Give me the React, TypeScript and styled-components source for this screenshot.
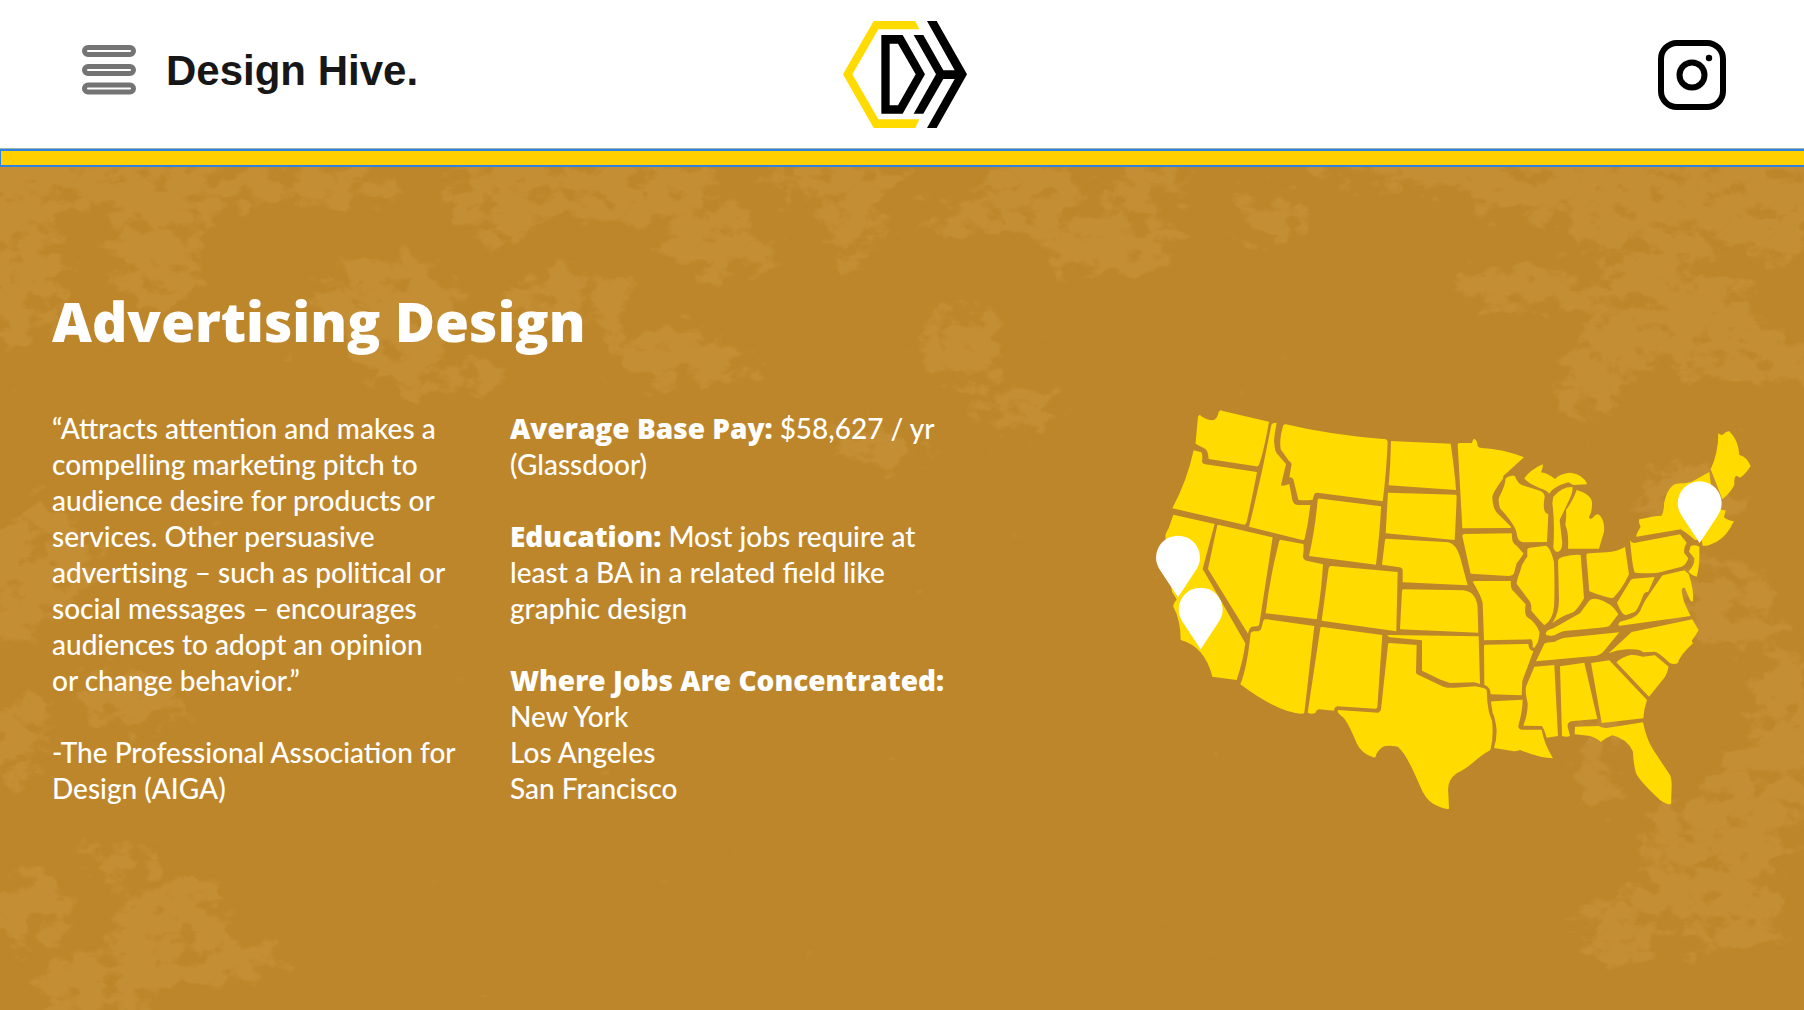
import React from "react";
import styled, { createGlobalStyle } from "styled-components";

const GlobalStyle = createGlobalStyle`
  *, *::before, *::after { box-sizing: border-box; }
  body { margin: 0; background: #bd862a; }
`;

const Page = styled.div`
  min-height: 100vh;
  display: flex;
  flex-direction: column;
`;

const Header = styled.header`
  display: grid;
  grid-template-columns: 1fr auto 1fr;
  align-items: center;
  min-height: 149px;
  padding: 1px 78px 0 82px;
  background: #fff;
  border-bottom: 1px solid #9ab6ae;
`;

const Brand = styled.div`
  display: flex;
  align-items: center;
  gap: 30px;
  padding-bottom: 9px;
`;

const IconButton = styled.button`
  display: flex;
  padding: 0;
  border: 0;
  background: none;
  cursor: pointer;
`;

const BrandName = styled.a`
  padding-top: 2px;
  color: #171717;
  font: 700 42px/48px "Liberation Sans", Arial, sans-serif;
  text-decoration: none;
`;

const IconLink = styled.a<{ $end?: boolean }>`
  display: flex;
  justify-self: ${(p) => (p.$end ? "end" : "center")};
`;

const Stripe = styled.div`
  height: 18px;
  background: #ffcf00;
  border: 2px solid #2f82e0;
  border-width: 2px 0 2px 1px;
`;

const Main = styled.main`
  position: relative;
  flex: 1;
  padding: 120px 52px 60px;
  overflow: hidden;
  background: #bd862a;
  color: #fff;
  font: 500 28px/36px Lato, "Open Sans", sans-serif;
`;

const Texture = styled.svg`
  position: absolute;
  inset: 0;
  width: 100%;
  height: 100%;
`;

const Content = styled.div`
  position: relative;
`;

const Title = styled.h1`
  margin: 0 0 55px;
  font-family: "Open Sans", Lato, sans-serif;
  font-size: 55px;
  font-weight: 800;
  line-height: 68px;
`;

const Columns = styled.div`
  display: grid;
  grid-template-columns: 410px 460px minmax(0, 1fr);
  column-gap: 48px;
  align-items: start;
`;

const Copy = styled.div`
  display: flex;
  flex-direction: column;
  gap: 36px;
`;

const Paragraph = styled.p`
  margin: 0;
`;

const Strong = styled.strong`
  font-family: "Open Sans", Lato, sans-serif;
  font-weight: 800;
  line-height: 1;
`;

const Cities = styled.ul`
  margin: 0;
  padding: 0;
  list-style: none;
`;

const MapSvg = styled.svg`
  justify-self: end;
  width: 100%;
  max-width: 595px;
  height: auto;
`;

const MenuIcon = () => (
  <svg width="54" height="50" viewBox="0 0 54 50" fill="#fff" stroke="#747474" strokeWidth="5">
    <rect x="2.5" y="2.5" width="49" height="7" rx="3.5" />
    <rect x="2.5" y="21.5" width="49" height="7" rx="3.5" />
    <rect x="2.5" y="40" width="49" height="7" rx="3.5" />
  </svg>
);

const Logo = () => (
  <svg width="124" height="107" viewBox="127 63 372 321" overflow="visible">
    <path fill="#ffdb00" d="M222 63H347L359 88H236L158 223L236 358H359L347 384H222L130 223Z" />
    <path fillRule="evenodd" d="M245 105H309L376 223L309 341H245ZM270 131V316H295L348 223L295 131Z" />
    <path d="M342 105H371L431 211H465L382 63H411L502 223L411 384H382L465 237H431L371 341H342L409 223Z" />
  </svg>
);

const InstagramIcon = () => (
  <svg width="68" height="70" viewBox="0 0 68 70" fill="none" stroke="#000" strokeWidth="6">
    <rect x="3" y="3" width="62" height="64" rx="16" />
    <circle cx="34" cy="35" r="12.5" />
    <circle cx="51" cy="18" r="3.2" fill="#000" stroke="none" />
  </svg>
);

// Soft patches [cx, cy, rx, ry]; the filter breaks them up into worn paint.
const patches = [
  [60, 10, 190, 34], [20, 60, 40, 55], [158, 78, 52, 68], [280, 20, 130, 26], [25, 120, 45, 60],
  [500, 25, 58, 58], [390, 140, 80, 55], [440, 210, 90, 20], [640, 25, 90, 40], [720, 80, 60, 40], [570, 130, 75, 30],
  [850, 50, 34, 55], [830, 8, 80, 24], [960, 50, 50, 22], [1030, 25, 55, 40], [1110, 75, 75, 40],
  [1150, 12, 50, 22], [1270, 50, 40, 32], [1450, 4, 150, 24], [1640, 14, 200, 50], [1770, 35, 80, 60],
  [1660, 62, 100, 36], [1520, 122, 70, 30], [1660, 130, 100, 30], [1690, 175, 110, 34], [1770, 190, 90, 30],
  [1590, 215, 40, 45], [680, 190, 80, 35], [960, 180, 50, 42], [1010, 245, 50, 26], [880, 280, 55, 24],
  [40, 390, 65, 55], [130, 530, 60, 32], [20, 570, 35, 55], [20, 440, 35, 50],
  [170, 762, 62, 58], [100, 815, 80, 36], [220, 795, 70, 28], [30, 740, 45, 45], [120, 690, 40, 22],
  [1720, 440, 60, 50], [1785, 560, 40, 90], [1750, 640, 60, 60], [1700, 690, 60, 70],
  [1620, 760, 50, 40], [1730, 740, 60, 50], [1600, 600, 25, 50], [1690, 330, 60, 40],
];

const PaintTexture = () => (
  <Texture viewBox="0 0 1804 843" preserveAspectRatio="xMidYMin slice" aria-hidden="true">
    <filter id="worn" x="0" y="0" width="1804" height="843" filterUnits="userSpaceOnUse" colorInterpolationFilters="sRGB">
      <feGaussianBlur in="SourceGraphic" stdDeviation="12" result="soft" />
      <feTurbulence type="fractalNoise" baseFrequency="0.04 0.055" numOctaves="4" seed="8" result="noise" />
      <feComposite in="soft" in2="noise" operator="arithmetic" k1="0" k2="0.55" k3="1" k4="0" result="mix" />
      <feColorMatrix in="mix" type="matrix" values="0 0 0 0 0.769  0 0 0 0 0.557  0 0 0 0 0.208  0 0 0 6 -5" />
    </filter>
    <g filter="url(#worn)">
      {patches.map(([cx, cy, rx, ry], i) => (
        <ellipse key={i} cx={cx} cy={cy} rx={rx} ry={ry} />
      ))}
    </g>
  </Texture>
);

const northWest = [
  "M204 80Q208 70 214 79Q235 92 248 91Q262 88 266 66Q270 58 278 63L417 95Q400 190 387 224Q384 230 378 229L236 207Q234 180 225 176L199 163Q195 160 197 155Z",
  "M191 181L214 187Q219 192 216 215Q218 221 226 223L381 246Q365 330 350 396Q348 404 342 404L127 355Q172 270 191 181Z",
  "M130 374L254 402L218 536Q219 541 223 545L346 760Q340 810 320 870L247 860Q225 770 152 750Q152 690 130 650Q128 645 140 628L126 605L106 440Q106 430 116 415Z",
  "M262 405L268 405L428 442L388 702Q387 709 378 709L366 710Q358 712 354 731L234 537Z",
  "M424 105Q427 98 440 98Q430 150 433 160Q434 185 442 192L468 222L453 285Q456 290 478 282L487 330Q490 343 503 345L541 345Q535 400 524 446Q522 451 517 450L357 410Q395 260 424 105Z",
  "M459 108Q460 102 468 103Q600 135 768 148Q773 150 773 158Q769 250 758 334L563 308Q553 307 551 318L548 329Q520 333 505 329L490 268Q488 262 478 262L485 222Q483 216 477 213L452 178Q447 150 459 108Z",
  "M563 330Q565 325 572 326L753 349Q752 400 738 524L537 498Q555 420 563 330Z",
  "M447 455Q449 448 455 450L520 462Q522 465 520 490Q515 507 530 512L579 523Q575 600 560 688L407 670Q420 560 447 455Z",
  "M596 534Q598 527 605 528L803 546L799 724L575 692Z",
  "M783 153L962 161Q975 250 978 300L776 286Q782 220 783 153Z",
  "M774 308L978 314Q980 316 980 320Q978 380 974 450L767 430Z",
  "M765 449Q766 446 770 446L955 457Q978 462 990 500L1013 586L818 577L818 541Q817 533 808 532L756 524Z",
  "M816 602Q817 598 822 598L1000 601Q1042 606 1043 660L1045 728L810 718Z",
  "M774 735L1046 739L1050 882L1033 877L960 879L932 869L876 842L876 751L780 742Q770 738 774 735Z",
  "M774 764Q774 758 780 759L860 765L858 848Q860 853 866 855L940 890Q955 895 975 893L1036 889Q1060 893 1070 899L1072 935Q1074 965 1086 993Q1092 1040 1081 1080Q1060 1092 1045 1104Q1010 1136 980 1150Q950 1172 955 1210L957 1256Q950 1260 925 1249Q895 1238 878 1205L850 1143Q825 1090 805 1072Q795 1066 765 1068Q748 1075 739 1092Q738 1105 730 1102Q695 1092 680 1060Q650 985 633 977Q620 968 624 960L745 968Q752 966 753 958Z",
];

const southWest = [
  "M400 62Q403 57 410 58L553 78L523 338Q521 342 512 341Q440 335 331 253Q352 200 362 98L370 94L385 94Q392 93 394 85Z",
  "M571 84Q572 80 578 81L757 105L742 322Q740 327 735 326L622 319Q614 320 612 332Q590 330 568 328Q558 330 557 338Q545 344 533 338Z",
];

const northEast = [
  "M53 163Q54 159 60 159L96 159Q99 145 104 147Q112 152 113 168Q116 174 125 174Q190 177 252 202L190 258Q190 262 188 268Q160 305 157 320Q158 355 172 370L213 410Q214 415 208 414L67 415Z",
  "M216 257Q225 255 228 266Q235 280 245 285L300 302Q314 308 314 320Q307 360 318 369L325 373L321 456L250 457Q232 455 230 430Q226 405 180 355Q173 330 178 320Q195 290 197 265Q205 258 216 257Z",
  "M253 265Q270 240 308 223Q310 230 303 247Q325 250 345 267Q360 250 390 248Q430 252 442 283L400 285L385 277Q340 290 327 311Q320 300 300 295Q260 278 253 265Z",
  "M340 320Q365 290 397 291Q400 300 390 325L359 390L367 460Q365 485 352 486Q340 482 340 470Q345 400 337 340Z",
  "M410 300Q460 315 456 345Q455 370 447 380Q450 395 463 378Q470 370 478 375Q495 390 492 425L477 476L384 476Q387 430 376 405Q380 375 378 360Q400 330 410 300Z",
  "M67 438Q67 433 72 432L215 430L217 450Q218 460 230 467L250 490Q250 495 230 520L222 550Q218 558 205 558L92 551Z",
  "M99 577Q99 573 104 573L213 573Q210 595 220 603L257 643Q252 675 262 682Q285 695 298 725Q300 735 293 758L283 773L278 772Q279 750 272 748L132 751L128 640Q125 620 99 577Z",
  "M262 478Q264 474 270 473L318 467Q330 470 342 515Q345 600 342 650Q338 690 313 706Q303 695 298 690L274 662Q275 640 268 632L230 582Q230 570 240 545Q245 520 262 500Z",
  "M354 512Q356 503 370 500Q400 493 422 495L432 625Q415 655 400 667Q360 680 337 700Q357 670 357 630Z",
  "M439 497Q439 490 447 490L500 487Q530 485 555 471L567 553Q545 600 520 623Q510 628 448 604Z",
  "M447 633Q455 623 475 628Q515 638 535 673L508 708Q500 713 380 722Q360 724 345 735Q318 742 317 730Q320 720 340 715L420 670Z",
  "M571 572Q573 567 580 566L644 561L625 605Q612 605 608 620Q595 655 585 665Q560 675 555 675Q545 672 531 638Q560 590 571 572Z",
  "M664 560Q668 554 675 554L733 541L746 552Q762 600 759 632Q756 638 750 630L735 595Q728 588 725 600Q726 630 752 678L540 707Q530 706 540 695Q555 692 575 685Q598 675 606 650Q616 630 622 622Z",
  "M752 468Q765 463 778 470Q780 530 770 560Q755 556 745 545Q765 525 763 505L747 485Z",
  "M570 450Q573 458 582 459L720 433L740 458Q730 475 733 490L745 505Q738 525 725 530L660 547Q640 552 585 548Q578 540 570 450Z",
  "M598 388Q640 378 665 377Q673 360 672 340Q680 300 700 285Q710 278 735 280L755 275L808 246L813 285L843 330L835 350Q840 362 857 361L852 382Q870 395 882 393Q860 440 830 455Q800 470 788 467L785 450L765 450Q735 425 722 418L590 440Q585 438 602 410Q595 400 598 388Z",
  "M835 130Q845 138 850 133Q860 122 868 124Q895 150 898 195Q920 200 932 228Q915 255 900 263Q890 255 885 260Q882 270 883 285Q870 310 847 328L812 238Q835 190 835 130Z",
];

const southEast = [
  "M132 137Q132 134 137 134L265 132Q266 150 280 154L247 243L245 286L152 283Q152 262 133 254Z",
  "M153 307Q152 304 158 304L248 299Q248 330 235 378Q235 388 245 389L305 389Q312 430 339 475Q300 475 240 450Q225 455 218 453L162 444Q170 420 170 390Q165 350 158 340Z",
  "M313 131Q315 127 345 125Q355 117 375 113L538 97L490 155Q482 164 470 167L288 184Z",
  "M575 96L757 58Q760 65 776 90Q765 110 755 122L759 130Q720 165 713 190Q700 195 688 188Q660 160 645 155L610 157Q600 145 560 148Q530 150 506 160Z",
  "M529 187Q545 170 575 164Q595 165 608 170L645 166L686 200Q680 225 672 235L627 290Z",
  "M453 189L508 181L621 300Q612 325 610 355L485 369Z",
  "M360 199L433 188L472 357L400 363Q380 365 383 380L390 408Q380 413 366 408Z",
  "M283 200L343 195L354 408L320 413Q312 385 305 378L250 377Q264 340 263 310Q255 275 258 260Z",
  "M405 380L475 378Q490 385 500 384L609 367Q620 420 640 450L690 525Q695 535 695 560L693 612Q680 615 660 600Q600 545 588 520Q580 490 579 455Q560 415 517 406Q500 412 482 426Q470 412 445 407L404 403Z",
];

const regions = [
  { paths: northWest, shift: "translate(0 0)" },
  { paths: southWest, shift: "translate(0 630)" },
  { paths: northEast, shift: "translate(930 0)" },
  { paths: southEast, shift: "translate(930 630)" },
];

const pins = [
  { city: "San Francisco", x: 144, y: 503 },
  { city: "Los Angeles", x: 212, y: 659 },
  { city: "New York", x: 1709, y: 340 },
];

const JobsMap = () => (
  <MapSvg viewBox="81 60 1785 1203" overflow="visible" role="img" aria-label="Map of the United States">
    <g fill="#ffdb00">
      {regions.map(({ paths, shift }) => (
        <g key={shift} transform={shift}>
          {paths.map((d) => (
            <path key={d} d={d} />
          ))}
        </g>
      ))}
    </g>
    {pins.map(({ city, x, y }) => (
      <path
        key={city}
        fill="#fff"
        transform={`translate(${x} ${y})`}
        d="M0 119L-52 40Q-66 20 -66 0A66 66 0 0 1 66 0Q66 20 52 40Z"
      />
    ))}
  </MapSvg>
);

export default function App() {
  return (
    <Page>
      <GlobalStyle />
      <Header>
        <Brand>
          <IconButton type="button" aria-label="Open menu">
            <MenuIcon />
          </IconButton>
          <BrandName href="#">Design Hive.</BrandName>
        </Brand>
        <IconLink href="#" aria-label="Home">
          <Logo />
        </IconLink>
        <IconLink href="#" aria-label="Instagram" $end>
          <InstagramIcon />
        </IconLink>
      </Header>
      <Stripe />
      <Main>
        <PaintTexture />
        <Content>
          <Title>Advertising Design</Title>
          <Columns>
            <Copy>
              <Paragraph>
                “Attracts attention and makes a compelling marketing pitch to audience desire for products or
                services. Other persuasive advertising – such as political or social messages – encourages
                audiences to adopt an opinion or&nbsp;change behavior.”
              </Paragraph>
              <Paragraph>-The Professional Association for Design (AIGA)</Paragraph>
            </Copy>
            <Copy>
              <Paragraph>
                <Strong>Average Base Pay:</Strong> $58,627 / yr (Glassdoor)
              </Paragraph>
              <Paragraph>
                <Strong>Education:</Strong> Most jobs require at least a BA in a related field like graphic design
              </Paragraph>
              <div>
                <Strong>Where Jobs Are Concentrated:</Strong>
                <Cities>
                  <li>New York</li>
                  <li>Los Angeles</li>
                  <li>San Francisco</li>
                </Cities>
              </div>
            </Copy>
            <JobsMap />
          </Columns>
        </Content>
      </Main>
    </Page>
  );
}
